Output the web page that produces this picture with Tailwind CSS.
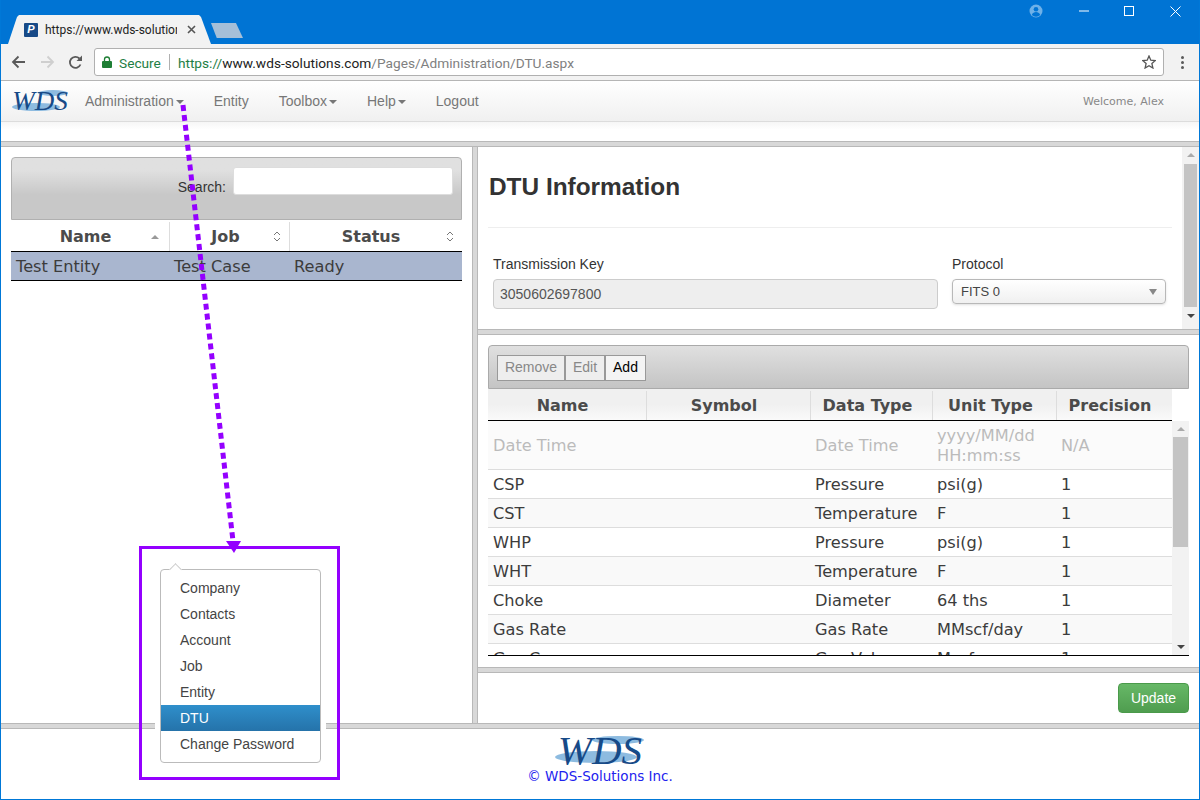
<!DOCTYPE html>
<html lang="en">

<head>
    <meta charset="UTF-8">
    <title>DTU Information</title>
    <script src="https://cdn.jsdelivr.net/npm/@tailwindcss/browser@4"></script>
</head>

<body class="font-['Liberation_Sans',sans-serif]">
    <div class="relative w-[1200px] h-[800px] overflow-hidden flex flex-col bg-white border-x border-b border-[#0078d7]">

        <!-- Browser title bar -->
        <div class="h-[44px] shrink-0 bg-[#0074d4] flex items-end pl-[7px] relative">
            <div class="w-[203px] h-[29px] bg-[#f2f2f2] [clip-path:polygon(0_100%,9px_2px,11px_0,191px_0,193px_2px,203px_100%)] flex items-center pl-[16px]">
                <div class="w-[14px] h-[14px] shrink-0 bg-[#174a87] rounded-[1px] flex items-center justify-center text-white text-[11px] font-bold italic leading-none">P</div>
                <div class="w-[132px] ml-[7px] shrink-0 overflow-hidden whitespace-nowrap text-[12px] text-[#222] font-['Roboto',sans-serif]">https://www.wds-solutions.com</div>
                <svg class="w-[9px] h-[9px] ml-[10px] shrink-0" viewBox="0 0 9 9"><path d="M1 1l7 7M8 1l-7 7" stroke="#555" stroke-width="1.6"/></svg>
            </div>
            <div class="w-[32px] h-[15px] mb-[6px] bg-[#a5bfd8] [clip-path:polygon(0_0,78%_0,100%_100%,18%_100%)]"></div>
            <!-- Window controls -->
            <div class="absolute top-0 right-0 h-[22px] flex items-center">
                <svg class="w-[14px] h-[14px] mr-[36px]" viewBox="0 0 14 14"><circle cx="7" cy="7" r="6.5" fill="#6eb1e8"/><circle cx="7" cy="5.2" r="2.3" fill="#0074d4"/><path d="M2.8 11c.8-2.2 2.4-3 4.2-3s3.4.8 4.2 3a6 6 0 0 1-8.400 0z" fill="#0074d4"/></svg>
                <svg class="w-[10px] h-[10px] mr-[35px]" viewBox="0 0 10 10"><path d="M0 5h10" stroke="#fff"/></svg>
                <svg class="w-[10px] h-[10px] mr-[36px]" viewBox="0 0 10 10"><rect x=".5" y=".5" width="9" height="9" fill="none" stroke="#fff"/></svg>
                <svg class="w-[11px] h-[11px] mr-[18px]" viewBox="0 0 11 11"><path d="M.5.5l10 10M10.5.5l-10 10" stroke="#fff"/></svg>
            </div>
        </div>

        <!-- Browser toolbar -->
        <div class="h-[37px] shrink-0 bg-[#f2f2f2] border-b border-[#b5b5b5] flex items-center pl-[10px]">
            <svg class="w-[15px] h-[14px]" viewBox="0 0 15 14"><path d="M14 7H2M7.500 1.500L2 7l5.500 5.500" fill="none" stroke="#5a5a5a" stroke-width="1.800"/></svg>
            <svg class="w-[15px] h-[14px] ml-[14px]" viewBox="0 0 15 14"><path d="M1 7h12M7.500 1.500L13 7l-5.500 5.500" fill="none" stroke="#cfcfcf" stroke-width="1.800"/></svg>
            <svg class="w-[15px] h-[15px] ml-[13px]" viewBox="0 0 15 15"><path d="M12.500 9.500A5.500 5.500 0 1 1 11.400 3.500" fill="none" stroke="#5a5a5a" stroke-width="1.800"/><path d="M8.500 6h5.500V.5z" fill="#5a5a5a"/></svg>
            <div class="ml-[11px] w-[1070px] h-[28px] bg-white border border-[#b0b0b0] rounded-[3px] flex items-center pl-[7px] pr-[7px] pt-[2px] text-[13.7px] font-['Roboto',sans-serif] whitespace-nowrap">
                <svg class="w-[10px] h-[12px] mr-[7px] -mt-[2px]" viewBox="0 0 10 12"><path d="M2.500 5V3.500a2.500 2.500 0 0 1 5 0V5" fill="none" stroke="#1e7e34" stroke-width="1.300"/><rect y="5" width="10" height="7" rx="1" fill="#1e7e34"/></svg>
                <span class="text-[#1e7e45]">Secure</span>
                <span class="w-px h-[16px] bg-[#b0b0b0] mx-[8px] -mt-[2px]"></span>
                <span class="text-[#1e7e45]">https://</span><span class="text-[#222]">www.wds-solutions.com</span><span class="text-[#808080]">/Pages/Administration/DTU.aspx</span>
                <svg class="w-[14px] h-[14px] ml-auto -mt-[2px]" viewBox="0 0 14 14"><path d="M7 1l1.800 4.200 4.500.4-3.400 3 1 4.400L7 10.700 3.100 13l1-4.400-3.400-3 4.500-.4z" fill="none" stroke="#555" stroke-width="1.300"/></svg>
            </div>
            <div class="ml-[17px] flex flex-col gap-[2px]">
                <div class="w-[3px] h-[3px] rounded-full bg-[#5a5a5a]"></div>
                <div class="w-[3px] h-[3px] rounded-full bg-[#5a5a5a]"></div>
                <div class="w-[3px] h-[3px] rounded-full bg-[#5a5a5a]"></div>
            </div>
        </div>

        <!-- App navbar -->
        <div class="h-[41px] shrink-0 bg-gradient-to-b from-white to-[#f0f0f0] border-b border-[#dcdcdc] flex items-center text-[14px] text-[#777]">
            <div class="relative w-[58px] h-[24px] ml-[10px] mt-[-1px] shrink-0">
                <svg class="absolute inset-0" width="58" height="24" viewBox="0 0 58 24"><ellipse cx="25" cy="18" rx="24" ry="4" fill="#8dbbe0"/><ellipse cx="42" cy="4" rx="15" ry="3" fill="#8dbbe0"/></svg>
                <span class="absolute inset-0 text-center font-['Liberation_Serif',serif] italic text-[27px] leading-[24px] text-[#174a87]">WDS</span>
            </div>
            <span class="ml-[16px] flex items-center">Administration<span class="ml-[2px] mt-[1px] border-x-[4px] border-x-transparent border-t-[4px] border-t-[#777]"></span></span>
            <span class="ml-[30px]">Entity</span>
            <span class="ml-[30px] flex items-center">Toolbox<span class="ml-[2px] mt-[1px] border-x-[4px] border-x-transparent border-t-[4px] border-t-[#777]"></span></span>
            <span class="ml-[30px] flex items-center">Help<span class="ml-[2px] mt-[1px] border-x-[4px] border-x-transparent border-t-[4px] border-t-[#777]"></span></span>
            <span class="ml-[30px]">Logout</span>
            <span class="ml-auto mr-[35px] mt-[2px] text-[11px] font-['DejaVu_Sans',sans-serif] text-[#888]">Welcome, Alex</span>
        </div>

        <div class="h-[19px] shrink-0 bg-gradient-to-b from-[#f6f6f6] to-white to-40%"></div>
        <div class="h-[6px] shrink-0 bg-[#d8d8d8] border-y border-[#b8b8b8]"></div>

        <!-- Main area -->
        <div class="flex flex-1 min-h-0">

            <!-- Left pane: entity list -->
            <div class="w-[471px] shrink-0 pl-[10px] pr-[10px] pt-[10px] font-['DejaVu_Sans',sans-serif]">
                <div class="h-[63px] rounded-t-[4px] border border-[#b0b0b0] bg-gradient-to-b from-[#e0e0e0] from-20% to-[#c8c8c8] to-60% flex items-start justify-end pt-[9px] pr-[8px] font-['Liberation_Sans',sans-serif] text-[14px] text-[#333]">
                    <span class="mt-[10px] mr-[7px]">Search:</span>
                    <div class="w-[220px] h-[28px] bg-white rounded-[3px] border border-[#ddd]"></div>
                </div>
                <div class="flex h-[32px] pt-[2px] bg-white border-b border-black text-[16px] font-bold text-[#4b4b4b]">
                    <div class="relative w-[159px] border-r border-[#ddd] flex items-center justify-center pr-[9px]">Name<span class="absolute right-[10px] top-[13px] border-x-[4px] border-x-transparent border-b-[4px] border-b-[#999]"></span></div>
                    <div class="relative w-[120px] border-r border-[#ddd] flex items-center justify-center pr-[8px]">Job<svg class="absolute right-[8px] top-[9px] w-[8px] h-[11px]" viewBox="0 0 8 11"><path d="M1 4l3-3 3 3M1 7l3 3 3-3" fill="none" stroke="#777"/></svg></div>
                    <div class="relative w-[172px] flex items-center justify-center pr-[10px]">Status<svg class="absolute right-[8px] top-[9px] w-[8px] h-[11px]" viewBox="0 0 8 11"><path d="M1 4l3-3 3 3M1 7l3 3 3-3" fill="none" stroke="#777"/></svg></div>
                </div>
                <div class="flex h-[29px] pt-[2px] items-center bg-[#a9b6cf] border-b border-black text-[16.2px] text-[#3c3c3c]">
                    <div class="w-[158px] pl-[5px]">Test Entity</div>
                    <div class="w-[120px] pl-[5px]">Test Case</div>
                    <div class="w-[173px] pl-[5px]">Ready</div>
                </div>
            </div>

            <div class="w-[6px] shrink-0 bg-[#d8d8d8] border-x border-[#b8b8b8]"></div>

            <!-- Right pane -->
            <div class="flex-1 min-w-0 flex flex-col">

                <!-- DTU information -->
                <div class="h-[182px] shrink-0 flex">
                    <div class="flex-1 min-w-0 pl-[10px] pr-[10px]">
                        <div class="h-[81px] border-b border-[#eee] flex items-center pl-[1px]">
                            <h1 class="text-[24.4px] font-bold text-[#333]">DTU Information</h1>
                        </div>
                        <div class="flex mt-[26px] pl-[5px] text-[14px] text-[#333] gap-[14px]">
                            <div class="w-[445px]">
                                <div class="h-[20px] leading-[20px]">Transmission Key</div>
                                <div class="mt-[5px] h-[30px] bg-[#eee] border border-[#ccc] rounded-[4px] pl-[6px] leading-[28px] text-[#555]">3050602697800</div>
                            </div>
                            <div class="w-[214px]">
                                <div class="h-[20px] leading-[20px]">Protocol</div>
                                <div class="mt-[5px] h-[25px] bg-gradient-to-b from-white to-[#f0f0f0] border border-[#b8b8b8] rounded-[4px] shadow-sm pl-[8px] flex items-center text-[13px] text-[#444]">FITS 0<span class="ml-auto mr-[8px] border-x-[4px] border-x-transparent border-t-[6px] border-t-[#888]"></span></div>
                            </div>
                        </div>
                    </div>
                    <div class="w-[17px] shrink-0 bg-[#f2f2f2] flex flex-col items-center">
                        <span class="mt-[6px] border-x-[4px] border-x-transparent border-b-[4px] border-b-[#aaa]"></span>
                        <div class="w-[13px] h-[143px] mt-[7px] bg-[#c4c4c4]"></div>
                        <span class="mt-[7px] border-x-[4px] border-x-transparent border-t-[4px] border-t-[#444]"></span>
                    </div>
                </div>

                <div class="h-[6px] shrink-0 bg-[#d8d8d8] border-y border-[#b8b8b8]"></div>

                <!-- Channels table -->
                <div class="h-[332px] shrink-0 pt-[10px] pl-[10px] pr-[10px]">
                    <div class="h-[44px] rounded-t-[4px] border border-[#aaa] bg-gradient-to-b from-[#e0e0e0] to-[#c4c4c4] flex items-center pl-[8px] pt-[1px] text-[14px]">
                        <button class="h-[26px] w-[68px] border border-[#999] bg-[#eee] text-[#888]">Remove</button>
                        <button class="h-[26px] w-[40px] border border-[#999] bg-[#eee] text-[#888]">Edit</button>
                        <button class="h-[26px] w-[41px] border border-[#999] bg-[#f4f4f4] text-black">Add</button>
                    </div>
                    <div class="flex h-[32px] pt-[2px] w-[684px] bg-gradient-to-b from-[#f0f0f0] from-50% to-[#fafafa] border-b border-black text-[16px] font-bold text-[#4b4b4b] font-['DejaVu_Sans',sans-serif]">
                        <div class="w-[159px] border-r border-[#ddd] flex items-center justify-center pr-[9px]">Name</div>
                        <div class="w-[164px] border-r border-[#ddd] flex items-center justify-center pr-[9px]">Symbol</div>
                        <div class="w-[122px] border-r border-[#ddd] flex items-center justify-center pr-[8px]">Data Type</div>
                        <div class="w-[124px] border-r border-[#ddd] flex items-center justify-center pr-[8px]">Unit Type</div>
                        <div class="w-[115px] flex items-center justify-center pr-[9px]">Precision</div>
                    </div>
                    <div class="flex h-[235px] border-b border-black font-['DejaVu_Sans',sans-serif] text-[16.2px] text-[#3c3c3c]">
                        <div id="channelRows" class="w-[684px] h-full overflow-hidden">
                            <div class="flex h-[49px] pt-[2px] items-center border-b border-[#ddd] bg-[#fbfbfb] text-[#bbb]">
                                <div class="w-[322px] pl-[5px]">Date Time</div>
                                <div class="w-[122px] pl-[5px]">Date Time</div>
                                <div class="w-[124px] pl-[5px] leading-[20px]">yyyy/MM/dd<br>HH:mm:ss</div>
                                <div class="pl-[5px]">N/A</div>
                            </div>
                            <div class="flex h-[29px] pt-[2px] items-center border-b border-[#ddd] bg-white">
                                <div class="w-[322px] pl-[5px]">CSP</div><div class="w-[122px] pl-[5px]">Pressure</div><div class="w-[124px] pl-[5px]">psi(g)</div><div class="pl-[5px]">1</div>
                            </div>
                            <div class="flex h-[29px] pt-[2px] items-center border-b border-[#ddd] bg-[#f9f9f9]">
                                <div class="w-[322px] pl-[5px]">CST</div><div class="w-[122px] pl-[5px]">Temperature</div><div class="w-[124px] pl-[5px]">F</div><div class="pl-[5px]">1</div>
                            </div>
                            <div class="flex h-[29px] pt-[2px] items-center border-b border-[#ddd] bg-white">
                                <div class="w-[322px] pl-[5px]">WHP</div><div class="w-[122px] pl-[5px]">Pressure</div><div class="w-[124px] pl-[5px]">psi(g)</div><div class="pl-[5px]">1</div>
                            </div>
                            <div class="flex h-[29px] pt-[2px] items-center border-b border-[#ddd] bg-[#f9f9f9]">
                                <div class="w-[322px] pl-[5px]">WHT</div><div class="w-[122px] pl-[5px]">Temperature</div><div class="w-[124px] pl-[5px]">F</div><div class="pl-[5px]">1</div>
                            </div>
                            <div class="flex h-[29px] pt-[2px] items-center border-b border-[#ddd] bg-white">
                                <div class="w-[322px] pl-[5px]">Choke</div><div class="w-[122px] pl-[5px]">Diameter</div><div class="w-[124px] pl-[5px]">64 ths</div><div class="pl-[5px]">1</div>
                            </div>
                            <div class="flex h-[29px] pt-[2px] items-center border-b border-[#ddd] bg-[#f9f9f9]">
                                <div class="w-[322px] pl-[5px]">Gas Rate</div><div class="w-[122px] pl-[5px]">Gas Rate</div><div class="w-[124px] pl-[5px]">MMscf/day</div><div class="pl-[5px]">1</div>
                            </div>
                            <div class="flex h-[29px] pt-[2px] items-center bg-white">
                                <div class="w-[322px] pl-[5px]">Gas Cum</div><div class="w-[122px] pl-[5px]">Gas Volume</div><div class="w-[124px] pl-[5px]">Mscf</div><div class="pl-[5px]">1</div>
                            </div>
                        </div>
                        <div class="w-[17px] shrink-0 bg-[#f2f2f2] flex flex-col items-center">
                            <span class="mt-[6px] border-x-[4px] border-x-transparent border-b-[4px] border-b-[#aaa]"></span>
                            <div class="w-[15px] h-[110px] mt-[6px] bg-[#c4c4c4]"></div>
                            <span class="mt-auto mb-[6px] border-x-[4px] border-x-transparent border-t-[4px] border-t-[#444]"></span>
                        </div>
                    </div>
                </div>

                <div class="h-[6px] shrink-0 bg-[#d8d8d8] border-y border-[#b8b8b8]"></div>

                <!-- Update -->
                <div class="flex-1 flex items-start justify-end pt-[10px] pr-[10px]">
                    <button class="w-[71px] h-[30px] rounded-[4px] bg-gradient-to-b from-[#67b867] to-[#4f9d4f] border border-[#4a9a4a] text-white text-[14px]">Update</button>
                </div>
            </div>
        </div>

        <!-- Footer -->
        <div class="h-[6px] shrink-0 bg-[#d8d8d8] border-y border-[#b8b8b8]"></div>
        <div class="h-[70px] shrink-0 flex flex-col items-center">
            <div class="relative w-[92px] h-[30px] mt-[6px]">
                <svg class="absolute inset-0" width="92" height="30" viewBox="0 0 92 30"><ellipse cx="42" cy="22" rx="41" ry="6" fill="#8dbbe0"/><ellipse cx="64" cy="5" rx="26" ry="4" fill="#8dbbe0"/></svg>
                <span class="absolute inset-0 text-center font-['Liberation_Serif',serif] italic text-[41px] leading-[30px] text-[#174a87]">WDS</span>
            </div>
            <div class="mt-[1px] leading-[20px] font-['DejaVu_Sans',sans-serif] text-[13.5px] text-[#2222ee]">© WDS-Solutions Inc.</div>
        </div>

        <!-- Callout: dotted arrow -->
        <svg class="absolute left-[-1px] top-0 pointer-events-none" width="1200" height="800" viewBox="0 0 1200 800">
            <path d="M183 105L233 541" fill="none" stroke="#9400ff" stroke-width="5" stroke-dasharray="6 4"/>
            <path d="M226 541l8 12 7-12z" fill="#9400ff"/>
        </svg>

        <!-- Callout: highlighted dropdown menu -->
        <div class="absolute left-[138px] top-[546px] w-[201px] h-[234px] border-[3px] border-[#9400ff] flex items-start">
            <div class="relative mt-[20px] ml-[18px] w-[161px] h-[194px] bg-white border border-[#bbb] rounded-[4px] shadow-[0_0_0_5px_#fff] py-[5px] text-[14px] text-[#444]">
                <div class="absolute -top-[5px] left-[10px] w-[9px] h-[9px] rotate-45 bg-white border-l border-t border-[#ccc]"></div>
                <div class="relative h-[26px] pl-[19px] leading-[26px]">Company</div>
                <div class="h-[26px] pl-[19px] leading-[26px]">Contacts</div>
                <div class="h-[26px] pl-[19px] leading-[26px]">Account</div>
                <div class="h-[26px] pl-[19px] leading-[26px]">Job</div>
                <div class="h-[26px] pl-[19px] leading-[26px]">Entity</div>
                <div class="h-[26px] pl-[19px] leading-[26px] text-white bg-gradient-to-b from-[#2f8fcb] to-[#2573aa]">DTU</div>
                <div class="h-[26px] pl-[19px] leading-[26px]">Change Password</div>
            </div>
        </div>
    </div>
</body>

</html>
